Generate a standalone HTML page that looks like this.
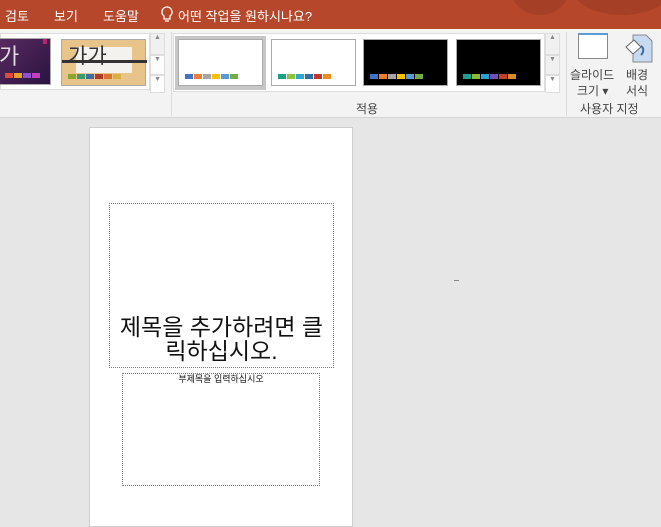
<!DOCTYPE html>
<html><head><meta charset="utf-8"><style>
*{margin:0;padding:0;box-sizing:border-box}
body{width:661px;height:520px;overflow:hidden;position:relative;background:#e6e6e6;font-family:"Liberation Sans","Noto Sans CJK KR",sans-serif}
.a{position:absolute}
.top{left:0;top:0;width:661px;height:29px;background:#b7472a;overflow:hidden}
.top span{position:absolute;top:6px;color:#fff;font-size:13px}
.rib{left:0;top:29px;width:661px;height:89px;background:#f3f3f3;border-bottom:1px solid #d5d5d5}
.th{position:absolute;border:1px solid #aaa}
.sw{position:absolute;bottom:6px;left:6px;display:flex;gap:1px}
.sw i{display:block;width:8px;height:5px}
.sb{position:absolute;width:15px;background:#fff;border:1px solid #ddd;font-size:7px;color:#888;text-align:center}
.lbl{font-size:12px;color:#444;position:absolute}
</style></head><body>
<div class="a top">
<div class="a" style="left:510px;top:-40px;width:60px;height:55px;border-radius:50%;background:#a53f25"></div>
<div class="a" style="left:572px;top:-40px;width:100px;height:55px;border-radius:50%;background:#a53f25"></div>
<span style="left:5px">검토</span><span style="left:54px">보기</span><span style="left:103px">도움말</span>
<svg class="a" style="left:161px;top:6px" width="12" height="17" viewBox="0 0 12 17"><path d="M6 1a5 5 0 0 0-3 9v3h6v-3a5 5 0 0 0-3-9zM4 15h4" fill="none" stroke="#fff" stroke-width="1.3"/></svg>
<span style="left:178px">어떤 작업을 원하시나요?</span>
</div>
<div class="a rib">
<div class="a" style="left:0;top:4px;width:150px;height:57px;background:#fff;border:1px solid #ddd"></div>
<div class="th" style="left:-2px;top:9px;width:53px;height:47px;background:linear-gradient(135deg,#5a2a60,#2a1440)"><span style="position:absolute;left:0;top:0;color:#ddd;font-size:22px">가</span><div style="position:absolute;right:3px;top:0;width:4px;height:5px;background:#c0206c"></div><div class="sw"><i style="background:#e04a3a"></i><i style="background:#e8a030"></i><i style="background:#9050d0"></i><i style="background:#c040c0"></i></div></div>
<div class="th" style="left:61px;top:10px;width:85px;height:47px;background:#e8c38a"><div style="position:absolute;left:14px;top:7px;width:56px;height:26px;background:#f4f2ee"></div><div style="position:absolute;left:0;top:20px;width:85px;height:3px;background:#333"></div><span style="position:absolute;left:6px;top:0;color:#333;font-size:21px">가가</span><div class="sw"><i style="background:#8ca530"></i><i style="background:#3b9a6e"></i><i style="background:#3f6fa0"></i><i style="background:#b03a2a"></i><i style="background:#d9722a"></i><i style="background:#d8b040"></i></div></div>
<div class="sb" style="left:150px;top:4px;height:22px;background:#f0f0f0">▲</div>
<div class="sb" style="left:150px;top:26px;height:20px">▼</div>
<div class="sb" style="left:150px;top:46px;height:18px">▼</div>
<div class="a" style="left:171px;top:3px;width:1px;height:84px;background:#dcdcdc"></div>
<div class="a" style="left:173px;top:4px;width:372px;height:59px;background:#fff;border:1px solid #ddd"></div>
<div class="a" style="left:175px;top:7px;width:91px;height:54px;background:#c6c6c6"></div>
<div class="th" style="left:178px;top:10px;width:85px;height:47px;background:#fff"><div class="sw"><i style="background:#4472c4"></i><i style="background:#ed7d31"></i><i style="background:#a5a5a5"></i><i style="background:#ffc000"></i><i style="background:#5b9bd5"></i><i style="background:#70ad47"></i></div></div>
<div class="th" style="left:271px;top:10px;width:85px;height:47px;background:#fff"><div class="sw"><i style="background:#1ca085"></i><i style="background:#8dc43e"></i><i style="background:#2ea8d0"></i><i style="background:#2d6ea8"></i><i style="background:#c0392b"></i><i style="background:#f08a24"></i></div></div>
<div class="th" style="left:363px;top:10px;width:85px;height:47px;background:#000"><div class="sw"><i style="background:#4472c4"></i><i style="background:#ed7d31"></i><i style="background:#a5a5a5"></i><i style="background:#ffc000"></i><i style="background:#5b9bd5"></i><i style="background:#70ad47"></i></div></div>
<div class="th" style="left:456px;top:10px;width:85px;height:47px;background:#000"><div class="sw"><i style="background:#1fa08a"></i><i style="background:#8cb83a"></i><i style="background:#2aa0d0"></i><i style="background:#7050b8"></i><i style="background:#c0402a"></i><i style="background:#d88a2a"></i></div></div>
<div class="sb" style="left:545px;top:4px;height:22px;background:#f0f0f0">▲</div>
<div class="sb" style="left:545px;top:26px;height:20px;background:#f0f0f0">▼</div>
<div class="sb" style="left:545px;top:46px;height:18px">▼</div>
<div class="lbl" style="left:356px;top:71px">적용</div>
<div class="a" style="left:566px;top:3px;width:1px;height:84px;background:#dcdcdc"></div>
<div class="a" style="left:578px;top:4px;width:30px;height:26px;border:1px solid #888;background:#fff;border-top:2px solid #5b9bd5"></div>
<div class="lbl" style="left:570px;top:37px">슬라이드</div>
<div class="lbl" style="left:577px;top:53px">크기 ▾</div>
<svg class="a" style="left:624px;top:4px" width="30" height="30" viewBox="0 0 30 30"><path d="M9 2h13l6 6v21H9z" fill="#c8daf0" stroke="#888"/><path d="M2 14l8-7 7 7-8 7z" fill="#fff" stroke="#666"/><path d="M17 13c3 2 3 6 0 9" fill="none" stroke="#2f6fb0" stroke-width="2"/></svg>
<div class="lbl" style="left:626px;top:37px">배경</div>
<div class="lbl" style="left:626px;top:53px">서식</div>
<div class="lbl" style="left:580px;top:71px">사용자 지정</div>
</div>
<div class="a" style="left:89px;top:127px;width:264px;height:400px;background:#fff;border:1px solid #cfcfcf"></div>
<div class="a" style="left:109px;top:203px;width:225px;height:165px;border:1px dotted #777"></div>
<div class="a" style="left:105px;top:315px;width:233px;text-align:center;font-size:23px;line-height:24px;color:#111">제목을 추가하려면 클<br>릭하십시오.</div>
<div class="a" style="left:122px;top:373px;width:198px;height:113px;border:1px dotted #777"></div>
<div class="a" style="left:122px;top:372px;width:198px;text-align:center;font-size:9px;color:#111">부제목을 입력하십시오</div>
<div class="a" style="left:454px;top:280px;width:5px;height:1px;background:#888"></div>
</body></html>
